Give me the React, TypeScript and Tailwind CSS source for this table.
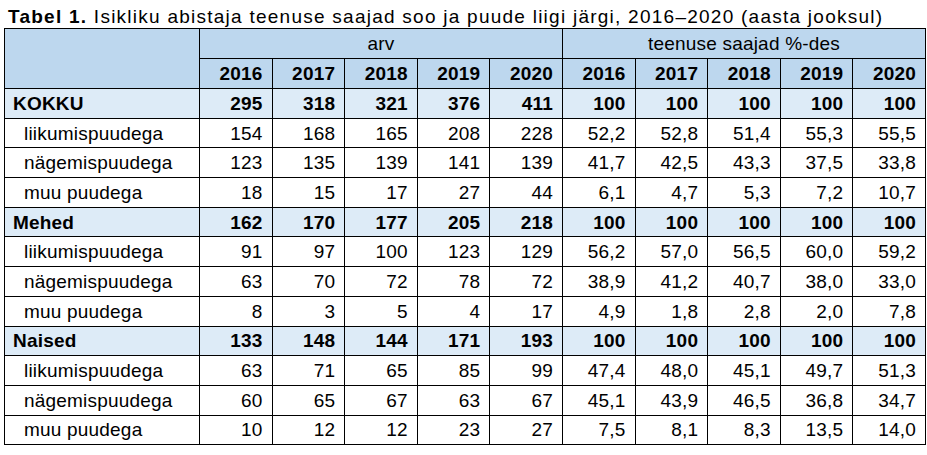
import React from 'react'

type Row = { label: string; bold?: boolean; arv: number[]; pct: string[] }

const YEARS = [2016, 2017, 2018, 2019, 2020]

const ROWS: Row[] = [
  { label: 'KOKKU', bold: true, arv: [295, 318, 321, 376, 411], pct: ['100', '100', '100', '100', '100'] },
  { label: 'liikumispuudega', arv: [154, 168, 165, 208, 228], pct: ['52,2', '52,8', '51,4', '55,3', '55,5'] },
  { label: 'nägemispuudega', arv: [123, 135, 139, 141, 139], pct: ['41,7', '42,5', '43,3', '37,5', '33,8'] },
  { label: 'muu puudega', arv: [18, 15, 17, 27, 44], pct: ['6,1', '4,7', '5,3', '7,2', '10,7'] },
  { label: 'Mehed', bold: true, arv: [162, 170, 177, 205, 218], pct: ['100', '100', '100', '100', '100'] },
  { label: 'liikumispuudega', arv: [91, 97, 100, 123, 129], pct: ['56,2', '57,0', '56,5', '60,0', '59,2'] },
  { label: 'nägemispuudega', arv: [63, 70, 72, 78, 72], pct: ['38,9', '41,2', '40,7', '38,0', '33,0'] },
  { label: 'muu puudega', arv: [8, 3, 5, 4, 17], pct: ['4,9', '1,8', '2,8', '2,0', '7,8'] },
  { label: 'Naised', bold: true, arv: [133, 148, 144, 171, 193], pct: ['100', '100', '100', '100', '100'] },
  { label: 'liikumispuudega', arv: [63, 71, 65, 85, 99], pct: ['47,4', '48,0', '45,1', '49,7', '51,3'] },
  { label: 'nägemispuudega', arv: [60, 65, 67, 63, 67], pct: ['45,1', '43,9', '46,5', '36,8', '34,7'] },
  { label: 'muu puudega', arv: [10, 12, 12, 23, 27], pct: ['7,5', '8,1', '8,3', '13,5', '14,0'] },
]

const cell = 'border border-black px-[9px] text-right align-middle'

export default function App() {
  return (
    <div className="h-[455px] w-[927px] bg-white text-[19px] leading-none text-black [font-family:'Liberation_Sans',Arial,sans-serif]">
      <p className="h-[28px] whitespace-nowrap pl-[8px] pt-[7px] tracking-[1.25px]">
        <span className="font-bold">Tabel 1.</span> Isikliku abistaja teenuse saajad soo ja puude liigi järgi, 2016–2020 (aasta jooksul)
      </p>
      <table className="ml-[4px] w-[922px] table-fixed border-collapse tracking-[0.2px]">
        <colgroup>
          <col className="w-[195px]" />
          {Array.from({ length: 10 }).map((_, i) => <col key={i} />)}
        </colgroup>
        <thead className="bg-[#bdd7ee]">
          <tr className="h-[30px]">
            <th rowSpan={2} className="border border-black" />
            <th colSpan={5} className="border border-black text-center font-normal">arv</th>
            <th colSpan={5} className="border border-black text-center font-normal">teenuse saajad %-des</th>
          </tr>
          <tr className="h-[30px]">
            {[...YEARS, ...YEARS].map((y, i) => (
              <th key={i} className={cell + ' font-bold'}>{y}</th>
            ))}
          </tr>
        </thead>
        <tbody>
          {ROWS.map((r, i) => (
            <tr key={i} className={r.bold ? 'h-[29.7px] bg-[#ddebf7] font-bold' : 'h-[29.7px]'}>
              <td className={r.bold ? 'border border-black pl-[8px]' : 'border border-black pl-[19px]'}>{r.label}</td>
              {r.arv.map((v, j) => <td key={'a' + j} className={cell}>{v}</td>)}
              {r.pct.map((v, j) => <td key={'p' + j} className={cell}>{v}</td>)}
            </tr>
          ))}
        </tbody>
      </table>
    </div>
  )
}
